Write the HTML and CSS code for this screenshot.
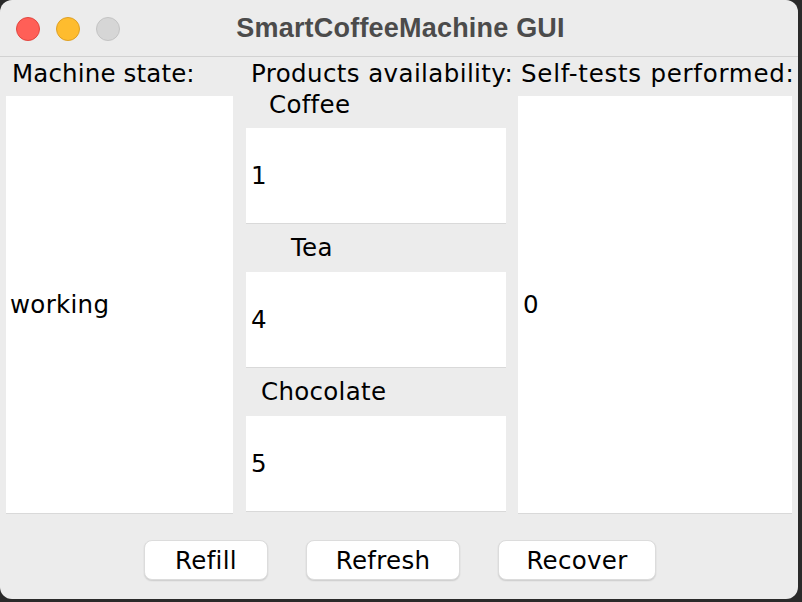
FILE: index.html
```html
<!DOCTYPE html>
<html>
<head>
<meta charset="utf-8">
<link rel="stylesheet" href="styles.css">
</head>
<body>
<div class="window">
  <div class="titlebar">
    <div class="lights">
      <span class="light red"></span>
      <span class="light yellow"></span>
      <span class="light gray"></span>
    </div>
    <div class="title">SmartCoffeeMachine GUI</div>
  </div>
  <div class="content">
    <div class="columns">
      <div class="col col-state">
        <div class="label">Machine state:</div>
        <div class="panel"><span class="value">working</span></div>
      </div>
      <div class="col col-products">
        <div class="label label-products">Products availability:</div>
        <div class="products">
          <div class="plabel plabel-coffee">Coffee</div>
          <div class="pbox">1</div>
          <div class="plabel plabel-tea">Tea</div>
          <div class="pbox">4</div>
          <div class="plabel plabel-choc">Chocolate</div>
          <div class="pbox">5</div>
        </div>
      </div>
      <div class="col col-tests">
        <div class="label label-tests">Self-tests performed:</div>
        <div class="panel"><span class="value value-tests">0</span></div>
      </div>
    </div>
    <div class="buttons">
      <button class="btn btn-refill">Refill</button>
      <button class="btn btn-refresh">Refresh</button>
      <button class="btn btn-recover">Recover</button>
    </div>
  </div>
</div>
</body>
</html>
```

FILE: styles.css
```css
html, body {
  margin: 0;
  padding: 0;
  background: #2a2a2a;
  width: 802px;
  height: 602px;
  overflow: hidden;
}

.window {
  width: 798px;
  height: 599px;
  background: #ececec;
  border-radius: 12px;
  overflow: hidden;
  font-family: "DejaVu Sans", sans-serif;
  font-size: 24.5px;
  color: #000;
  display: flex;
  flex-direction: column;
}

.titlebar {
  height: 56px;
  border-bottom: 1px solid #d2d2d2;
  display: flex;
  align-items: center;
  position: relative;
  flex: none;
}

.lights {
  display: flex;
  gap: 16px;
  padding-left: 16px;
  padding-top: 1px;
}

.light {
  width: 22px;
  height: 22px;
  border-radius: 50%;
  display: block;
  border: 1px solid transparent;
}

.red { background: #ff5f57; border-color: #e2463f; }
.yellow { background: #febc2e; border-color: #dea024; }
.gray { background: #d6d6d6; border-color: #c4c4c4; }

.title {
  position: absolute;
  left: 0;
  right: 0;
  top: 0;
  height: 56px;
  line-height: 56px;
  text-align: center;
  font-family: "Liberation Sans", Arial, sans-serif;
  font-weight: bold;
  font-size: 27px;
  color: #4b4b4b;
  padding-left: 3px;
  letter-spacing: 0.2px;
}

.content {
  flex: 1;
  display: flex;
  flex-direction: column;
}

.columns {
  display: flex;
  padding-left: 6px;
  gap: 12px;
}

.col {
  display: flex;
  flex-direction: column;
}

.col-state { width: 227px; margin-right: 1px; }
.col-products { width: 260px; }
.col-tests { width: 274px; }

.label {
  height: 39px;
  line-height: 33px;
  padding-left: 6px;
  white-space: nowrap;
  letter-spacing: 0.15px;
}

.label-products { padding-left: 5px; letter-spacing: 0.4px; }
.label-tests { padding-left: 3px; letter-spacing: 0.75px; }

.panel {
  height: 417px;
  background: #fff;
  border-bottom: 1px solid #d9d9d9;
  display: flex;
  align-items: center;
}

.value {
  padding-left: 4px;
  letter-spacing: 0.3px;
}

.value-tests { padding-left: 5px; }

.products {
  display: flex;
  flex-direction: column;
}

.plabel {
  height: 48px;
  line-height: 48px;
  white-space: nowrap;
  letter-spacing: 0.3px;
}

.plabel-coffee { height: 32px; line-height: 18px; padding-left: 23px; }
.plabel-tea { padding-left: 45px; }
.plabel-choc { padding-left: 15px; }

.pbox {
  height: 95px;
  background: #fff;
  border-bottom: 1px solid #d9d9d9;
  display: flex;
  align-items: center;
  padding-left: 5px;
}

.buttons {
  display: flex;
  justify-content: center;
  gap: 38px;
  padding-top: 26px;
  padding-left: 2px;
}

.btn {
  height: 40px;
  background: #fff;
  border: 1px solid #dcdcdc;
  border-radius: 8px;
  box-shadow: 0 1px 1.5px rgba(0, 0, 0, 0.14);
  font-family: "DejaVu Sans", sans-serif;
  font-size: 24.5px;
  color: #000;
  padding: 0;
  letter-spacing: 0.3px;
}

.btn-refill { width: 124px; }
.btn-refresh { width: 154px; }
.btn-recover { width: 158px; }
```
